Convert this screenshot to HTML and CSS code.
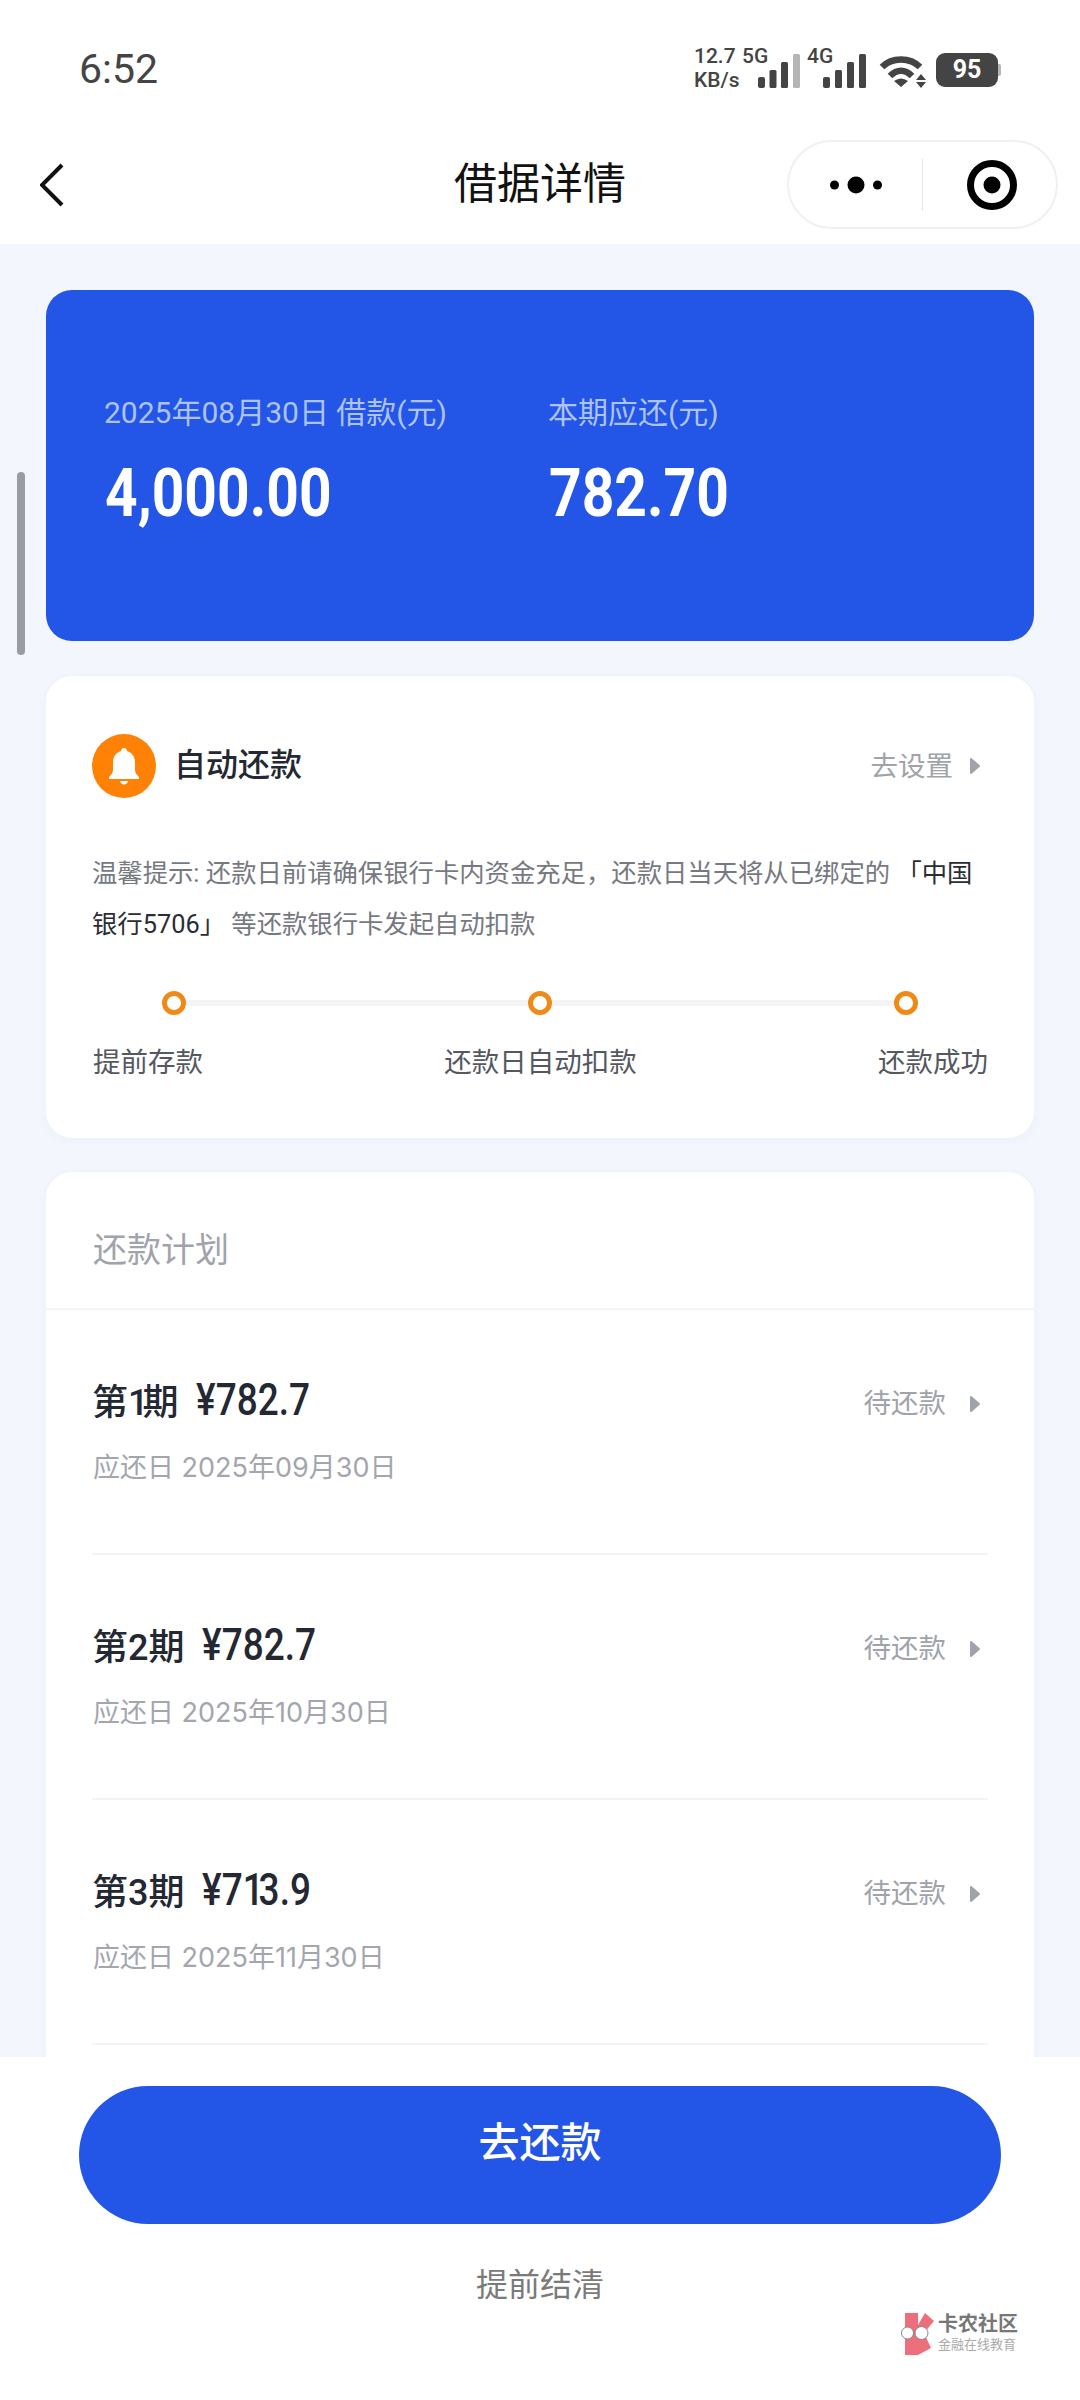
FILE: index.html
```html
<!DOCTYPE html>
<html>
<head>
    <meta charset="utf-8">
    <title>借据详情</title>
    <link rel="stylesheet" href="styles.css">
</head>
<body>
<div class="page">
    <header class="top">
        <div class="status-bar">
            <span class="clock">6:52</span>
            <div class="status-icons">
                <div class="net-speed"><span>12.7</span><span>KB/s</span></div>
                <div class="signal signal-5g">
                    <span class="signal-name">5G</span>
                    <svg class="bars" width="42" height="34" viewBox="0 0 42 34">
                        <rect x="0" y="23" width="7" height="11" rx="2" fill="#444"/>
                        <rect x="11.500" y="16" width="7" height="18" rx="1.500" fill="#444"/>
                        <rect x="23" y="8" width="7" height="26" rx="1.500" fill="#444"/>
                        <rect x="35" y="0" width="7" height="34" rx="1.500" fill="#b5b5b5"/>
                    </svg>
                </div>
                <div class="signal signal-4g">
                    <span class="signal-name">4G</span>
                    <svg class="bars" width="43" height="34" viewBox="0 0 43 34">
                        <rect x="0" y="23" width="7" height="11" rx="2" fill="#444"/>
                        <rect x="12" y="16" width="7" height="18" rx="1.500" fill="#444"/>
                        <rect x="24" y="8" width="7" height="26" rx="1.500" fill="#444"/>
                        <rect x="36" y="0" width="7" height="34" rx="1.500" fill="#444"/>
                    </svg>
                </div>
                <svg class="wifi" width="47" height="36" viewBox="0 0 47 36">
                    <path d="M3 15 C13 5 31 5 41 15" fill="none" stroke="#444" stroke-width="6.500"/>
                    <path d="M11 24 C18 17 26 17 33 24" fill="none" stroke="#444" stroke-width="6.500"/>
                    <path d="M15 29 Q22 24 29 29 L22 35 Z" fill="#444"/>
                    <path d="M42 22 L47 28 H37 Z M37 30 H47 L42 36 Z" fill="#444"/>
                </svg>
                <div class="battery">
                    <span class="battery-level">95</span>
                    <span class="battery-cap"></span>
                </div>
            </div>
        </div>
        <nav class="nav-bar">
            <svg class="back" width="24" height="44" viewBox="0 0 24 44">
                <path d="M22 2 L2 22 L22 42" fill="none" stroke="#111" stroke-width="4"/>
            </svg>
            <h1 class="nav-title">借据详情</h1>
            <div class="capsule">
                <div class="capsule-part capsule-more">
                    <svg width="52" height="18" viewBox="0 0 52 18">
                        <circle cx="4.500" cy="9" r="4.500" fill="#000"/>
                        <circle cx="26" cy="9" r="8.500" fill="#000"/>
                        <circle cx="47.500" cy="9" r="4.500" fill="#000"/>
                    </svg>
                </div>
                <span class="capsule-line"></span>
                <div class="capsule-part capsule-target">
                    <svg width="50" height="50" viewBox="0 0 50 50">
                        <circle cx="25" cy="25" r="21.500" fill="none" stroke="#000" stroke-width="7"/>
                        <circle cx="25" cy="25" r="8.500" fill="#000"/>
                    </svg>
                </div>
            </div>
        </nav>
    </header>

    <main class="content">
        <section class="loan-card">
            <div class="loan-col loan-col-first">
                <p class="loan-label">2025年08月30日 借款(元)</p>
                <p class="loan-value"><span>4,000.00</span></p>
            </div>
            <div class="loan-col">
                <p class="loan-label">本期应还(元)</p>
                <p class="loan-value"><span>782.70</span></p>
            </div>
        </section>

        <section class="card auto-card">
            <div class="auto-head">
                <svg class="bell" width="64" height="64" viewBox="0 0 64 64">
                    <circle cx="32" cy="32" r="32" fill="#ff8207"/>
                    <path d="M32 14 C34 14 35 15.500 35 17 C40 18.500 43 23 43 28 V36 C43 39 45 41 47 43 V45 H17 V43 C19 41 21 39 21 36 V28 C21 23 24 18.500 29 17 C29 15.500 30 14 32 14 Z" fill="#fff"/>
                    <path d="M28 47 H36 C35.500 49 34 50.500 32 50.500 C30 50.500 28.500 49 28 47 Z" fill="#fff"/>
                </svg>
                <h2 class="auto-title">自动还款</h2>
                <span class="link-text">去设置</span>
                <svg class="arrow" width="12" height="18" viewBox="0 0 12 18">
                    <path d="M2 2 L10 9 L2 16 Z" fill="#a0a3aa" stroke="#a0a3aa" stroke-width="2" stroke-linejoin="round"/>
                </svg>
            </div>
            <p class="tip">温馨提示: 还款日前请确保银行卡内资金充足，还款日当天将从已绑定的 <em>「中国</em><em>银行5706」</em> 等还款银行卡发起自动扣款</p>
            <div class="step-track">
                <span class="step-dot"></span>
                <span class="step-line"></span>
                <span class="step-dot"></span>
                <span class="step-line"></span>
                <span class="step-dot"></span>
            </div>
            <div class="step-names">
                <span>提前存款</span>
                <span>还款日自动扣款</span>
                <span>还款成功</span>
            </div>
        </section>

        <section class="card plan-card">
            <h2 class="plan-title">还款计划</h2>
            <ul class="plan-list">
                <li class="plan-row">
                    <div class="plan-info">
                        <p class="plan-amount">第<span class="narrow-one">1</span>期 <span class="money">¥782.7</span></p>
                        <p class="plan-date">应还日 2025年09月30日</p>
                    </div>
                    <span class="link-text">待还款</span>
                    <svg class="arrow" width="12" height="18" viewBox="0 0 12 18">
                        <path d="M2 2 L10 9 L2 16 Z" fill="#a0a3aa" stroke="#a0a3aa" stroke-width="2" stroke-linejoin="round"/>
                    </svg>
                </li>
                <li class="plan-row">
                    <div class="plan-info">
                        <p class="plan-amount">第2期 <span class="money">¥782.7</span></p>
                        <p class="plan-date">应还日 2025年10月30日</p>
                    </div>
                    <span class="link-text">待还款</span>
                    <svg class="arrow" width="12" height="18" viewBox="0 0 12 18">
                        <path d="M2 2 L10 9 L2 16 Z" fill="#a0a3aa" stroke="#a0a3aa" stroke-width="2" stroke-linejoin="round"/>
                    </svg>
                </li>
                <li class="plan-row">
                    <div class="plan-info">
                        <p class="plan-amount">第3期 <span class="money">¥7<span class="narrow-one">1</span>3.9</span></p>
                        <p class="plan-date">应还日 2025年11月30日</p>
                    </div>
                    <span class="link-text">待还款</span>
                    <svg class="arrow" width="12" height="18" viewBox="0 0 12 18">
                        <path d="M2 2 L10 9 L2 16 Z" fill="#a0a3aa" stroke="#a0a3aa" stroke-width="2" stroke-linejoin="round"/>
                    </svg>
                </li>
            </ul>
        </section>
    </main>

    <footer class="bottom">
        <button class="pay-btn">去还款</button>
        <p class="settle">提前结清</p>
    </footer>

    <!-- scroll indicator and community mark sit above the page -->
    <span class="scroll-thumb"></span>
    <div class="mark">
        <svg width="36" height="44" viewBox="0 0 36 44">
            <path d="M5 2 H18 V14 L25 2 L34 10 L24 22 L31 37 L18 44 H5 Z" fill="#ee6f7c"/>
            <circle cx="7.500" cy="22" r="6" fill="#fff" stroke="#888" stroke-width="1"/>
            <circle cx="21.500" cy="22" r="6.500" fill="#fff" stroke="#888" stroke-width="1"/>
        </svg>
        <div class="mark-text">
            <span class="mark-name">卡农社区</span>
            <span class="mark-sub">金融在线教育</span>
        </div>
    </div>
</div>
</body>
</html>
```

FILE: styles.css
```css
* {
    box-sizing: border-box;
}
html, body {
    margin: 0;
    padding: 0;
}
body {
    font-family: Roboto, "Noto Sans CJK SC", sans-serif;
    background: #f3f6fd;
}
p, h1, h2, ul {
    margin: 0;
    padding: 0;
}
.page {
    position: relative;
    width: 1080px;
    height: 2400px;
    display: flex;
    flex-direction: column;
    overflow: hidden;
}

/* top area */
.top {
    height: 244px;
    flex: none;
    background: #fff;
}
.status-bar {
    height: 88px;
    display: flex;
    justify-content: space-between;
    padding: 50px 79px 0 79px;
}
.clock {
    font-size: 41px;
    line-height: 38px;
    font-weight: 400;
    color: #444;
}
.status-icons {
    display: flex;
    height: 36px;
    margin-top: 2px;
    color: #444;
}
.net-speed {
    display: flex;
    flex-direction: column;
    width: 48px;
    font-size: 21px;
    line-height: 24px;
    font-weight: 500;
    margin-top: -8px;
}
.signal {
    display: grid;
    height: 36px;
}
.signal > * {
    grid-area: 1 / 1;
}
.signal-name {
    font-size: 21px;
    line-height: 24px;
    font-weight: 500;
    margin-top: -8px;
    justify-self: start;
}
.bars {
    justify-self: end;
    align-self: end;
}
.signal-5g {
    width: 58px;
}
.signal-4g {
    width: 59px;
    margin-left: 7px;
}
.wifi {
    margin-left: 13px;
}
.battery {
    display: flex;
    align-items: center;
    margin-left: 10px;
}
.battery-level {
    width: 62px;
    height: 34px;
    border-radius: 9px;
    background: #444;
    color: #fff;
    font-size: 25px;
    line-height: 34px;
    font-weight: 700;
    text-align: center;
}
.battery-cap {
    width: 3px;
    height: 12px;
    background: #b5b5b5;
    border-radius: 0 2px 2px 0;
}
.nav-bar {
    height: 156px;
    display: grid;
    grid-template-columns: 1fr auto 1fr;
    align-items: center;
    padding: 52px 22px 15px;
}
.back {
    margin-left: 18px;
}
.nav-title {
    font-size: 43px;
    line-height: 89px;
    font-weight: 400;
    color: #111;
}
.capsule {
    justify-self: end;
    width: 271px;
    height: 89px;
    display: flex;
    align-items: center;
    border: 2px solid #f0f0f0;
    border-radius: 45px;
}
.capsule-part {
    display: flex;
    justify-content: center;
    align-items: center;
}
.capsule-more {
    width: 133px;
}
.capsule-target {
    flex: 1;
    padding-left: 5px;
}
.capsule-line {
    width: 1px;
    height: 52px;
    background: #e6e6e6;
}

/* scrolling content */
.content {
    flex: 1;
    min-height: 0;
    overflow: hidden;
    padding: 46px 46px 0;
}
.loan-card {
    height: 351px;
    display: flex;
    padding: 102px 58px 0;
    background: #2355e6;
    border-radius: 26px;
}
.loan-col-first {
    width: 444px;
}
.loan-label {
    font-size: 30px;
    line-height: 42px;
    color: #adc3f6;
}
.loan-value {
    margin-top: 23px;
    font-size: 67px;
    line-height: 72px;
    font-weight: 700;
    color: #fff;
}
/* the figures run narrower than the stock digits */
.loan-value span {
    display: inline-block;
    transform: scaleX(0.85);
    transform-origin: left center;
    margin-left: 1px;
}
.card {
    background: #fff;
    border-radius: 26px;
    margin-top: 35px;
    box-shadow: 0 2px 10px rgba(60, 80, 140, 0.04);
}
.auto-card {
    height: 462px;
    padding: 58px 46px 0;
}
.auto-head {
    display: flex;
    align-items: center;
    height: 64px;
}
.auto-title {
    flex: 1;
    margin-left: 18px;
    padding-bottom: 9px;
    font-size: 32px;
    font-weight: 500;
    color: #232833;
}
.link-text {
    font-size: 27.500px;
    color: #a0a3aa;
}
.auto-head .link-text {
    padding-bottom: 4px;
}
.arrow {
    margin-left: 16px;
    margin-right: 7px;
}
.tip {
    margin-top: 50px;
    font-size: 25.350px;
    line-height: 51px;
    color: #76797f;
}
.tip em {
    font-style: normal;
    color: #2a2d33;
}
.step-track {
    display: flex;
    align-items: center;
    margin-top: 41px;
    padding: 0 70px;
}
.step-dot {
    width: 24px;
    height: 24px;
    flex: none;
    border: 5px solid #f08a16;
    border-radius: 50%;
    background: #fff;
}
.step-line {
    flex: 1;
    height: 6px;
    background: #f3f4f6;
}
.step-names {
    display: flex;
    justify-content: space-between;
    margin-top: 28px;
    padding-left: 1px;
    font-size: 27.500px;
    line-height: 40px;
    color: #55585f;
}
.plan-card {
    min-height: 1000px;
    margin-top: 34px;
}
.plan-title {
    height: 138px;
    padding: 53px 46px 0 47px;
    font-size: 34px;
    line-height: 50px;
    font-weight: 400;
    color: #a0a3aa;
    border-bottom: 2px solid #f3f4f6;
}
.plan-list {
    list-style: none;
    padding: 0 46px;
}
.plan-row {
    height: 245px;
    display: flex;
    align-items: flex-start;
    padding-top: 62px;
    border-bottom: 2px solid #f3f4f6;
}
.plan-info {
    flex: 1;
}
.plan-amount {
    font-size: 36px;
    line-height: 56px;
    font-weight: 500;
    color: #232833;
}
.money {
    display: inline-block;
    font-size: 44px;
    margin-left: 9px;
    transform: scaleX(0.84);
    transform-origin: left center;
}
.narrow-one {
    letter-spacing: -6px;
}
.plan-date {
    margin-top: 17px;
    padding-left: 1px;
    font-family: Inter, "Noto Sans CJK SC", sans-serif;
    font-size: 27px;
    line-height: 40px;
    color: #a3a6ad;
}
.plan-row .link-text {
    line-height: 40px;
    margin-top: 12px;
}
.plan-row .arrow {
    margin-top: 23px;
    margin-left: 23px;
}

/* fixed bottom actions */
.bottom {
    height: 343px;
    flex: none;
    background: #fff;
    padding: 29px 79px 0;
    text-align: center;
}
.pay-btn {
    display: block;
    width: 100%;
    height: 138px;
    padding: 0 0 32px;
    border: 0;
    border-radius: 69px;
    background: #2355e6;
    color: #fff;
    font-family: inherit;
    font-size: 41px;
    font-weight: 500;
}
.settle {
    margin-top: 38px;
    font-size: 32px;
    line-height: 46px;
    color: #7a7a7a;
}
.scroll-thumb {
    position: absolute;
    left: 17px;
    top: 472px;
    width: 8px;
    height: 183px;
    border-radius: 4px;
    background: #9a9ca3;
}
.mark {
    position: absolute;
    left: 900px;
    top: 2311px;
    display: flex;
    gap: 2px;
}
.mark-text {
    display: flex;
    flex-direction: column;
}
.mark-name {
    font-size: 20px;
    line-height: 26px;
    font-weight: 700;
    color: #777;
}
.mark-sub {
    font-size: 13px;
    line-height: 16px;
    color: #aaa;
    white-space: nowrap;
}
```
